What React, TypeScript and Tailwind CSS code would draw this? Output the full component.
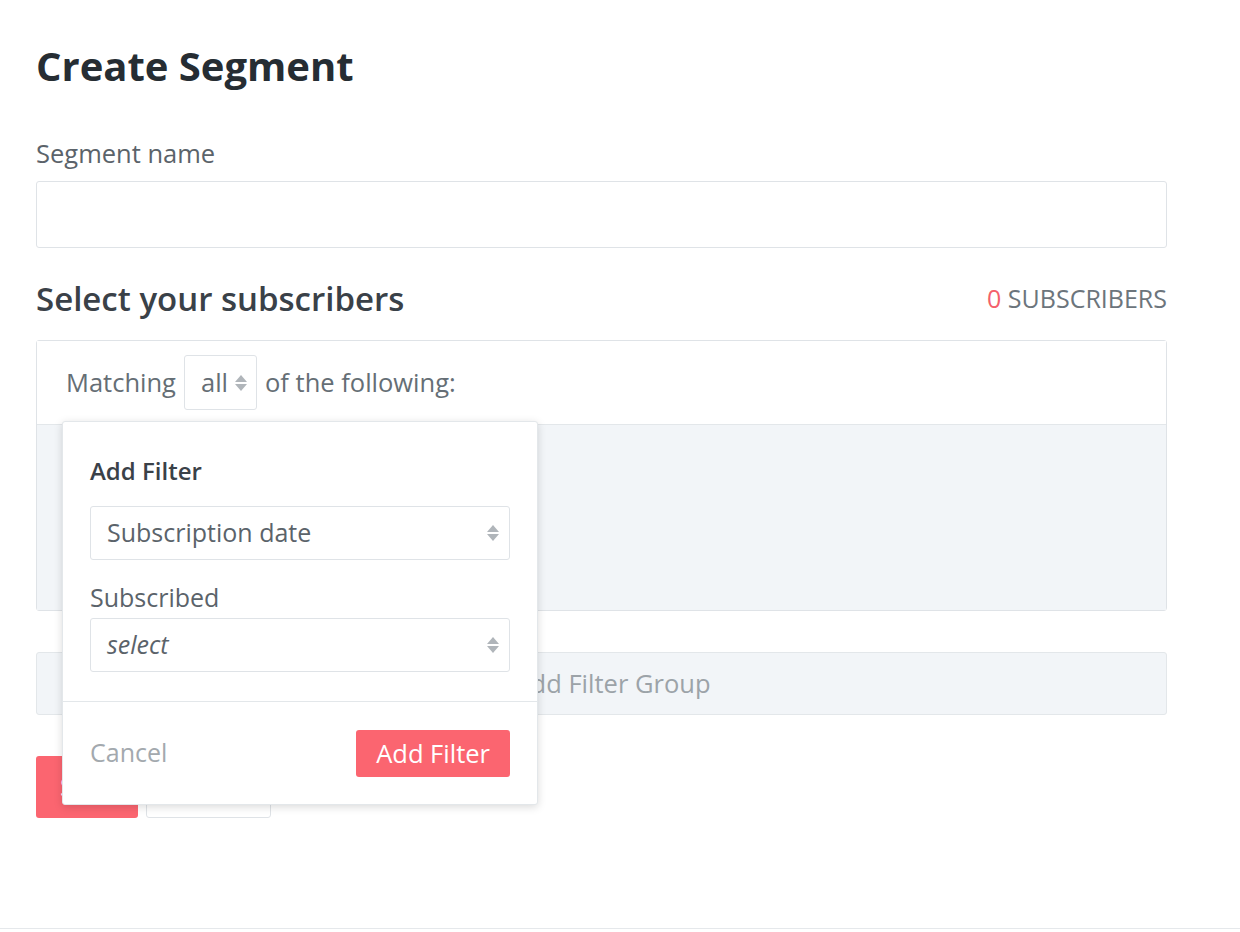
import React from "react";

const font = { fontFamily: '"Open Sans", "Noto Sans", sans-serif' };

function Arrows() {
  return (
    <svg width="14" height="18" viewBox="0 0 14 18" className="shrink-0">
      <path d="M7 1 L13 8 H1 Z" fill="#b0b5ba" />
      <path d="M7 17 L13 10 H1 Z" fill="#b0b5ba" />
    </svg>
  );
}

function Select({ value, italic }: { value: string; italic?: boolean }) {
  return (
    <div className="flex h-[54px] items-center justify-between rounded-[3px] border border-[#dfe3e7] bg-white pl-[16px] pr-[9px]">
      <span className={`text-[25px] text-[#5b636a] ${italic ? "italic" : ""}`}>{value}</span>
      <Arrows />
    </div>
  );
}

function AddFilterPopover() {
  return (
    <div className="absolute left-[25px] top-[80px] z-10 w-[476px] rounded-[3px] border border-[#e3e7ea] bg-white shadow-[0_2px_8px_rgba(0,0,0,0.15)]">
      <div className="px-[27px] pt-[32px] pb-[29px]">
        <div className="text-[24px] font-semibold leading-[34px] text-[#3a4148]">Add Filter</div>
        <div className="mt-[18px]">
          <Select value="Subscription date" />
        </div>
        <div className="mt-[21px] text-[25px] leading-[32px] text-[#5b636a]">Subscribed</div>
        <div className="mt-[5px]">
          <Select value="select" italic />
        </div>
      </div>
      <div className="flex h-[103px] items-center justify-between border-t border-[#e3e7ea] px-[27px]">
        <button className="text-[25px] text-[#a3a9ae]">Cancel</button>
        <button className="h-[47px] rounded-[3px] bg-[#fb6570] px-[20px] text-[25.5px] text-white">Add Filter</button>
      </div>
    </div>
  );
}

export default function App() {
  return (
    <div className="min-h-[932px] bg-white" style={font}>
      <div className="h-[929px] border-b border-[#e5e8eb] pl-[36px] pr-[73px] pt-[40px]">
        <h1 className="text-[40px] font-bold leading-[52px] text-[#262d33]">Create Segment</h1>

        <div className="mt-[44px] text-[25.5px] leading-[34px] text-[#5b636a]">Segment name</div>
        <input
          className="mt-[11px] h-[67px] w-full rounded-[3px] border border-[#dfe3e7] px-4 text-[25px] outline-none"
          type="text"
        />

        <div className="mt-[31px] flex items-center justify-between">
          <h2 className="text-[33px] font-semibold leading-[40px] text-[#3a4148]">Select your subscribers</h2>
          <div className="text-[25px] text-[#6c757c]">
            <span className="text-[#f4606b]">0</span> SUBSCRIBERS
          </div>
        </div>

        <div className="relative mt-[21px] rounded-[3px] border border-[#dfe3e7]">
          <div className="flex h-[83px] items-center gap-[8px] bg-white pl-[29px] text-[25.5px] text-[#656e75]">
            <span>Matching</span>
            <div className="flex h-[55px] items-center gap-[6px] rounded-[3px] border border-[#dfe3e7] pl-[16px] pr-[8px]">
              <span>all</span>
              <Arrows />
            </div>
            <span>of the following:</span>
          </div>
          <div className="h-[186px] border-t border-[#e3e7ea] bg-[#f2f5f8]" />
          <AddFilterPopover />
        </div>

        <div className="mt-[41px] flex h-[63px] items-center justify-center rounded-[3px] border border-[#e3e7ea] bg-[#f2f5f8] pl-[22px] text-[25.5px] text-[#9ca3a8]">
          Add Filter Group
        </div>

        <div className="mt-[41px] flex gap-[8px]">
          <button className="h-[62px] w-[102px] rounded-[3px] bg-[#fb6570] text-[25px] text-white">Save</button>
          <button className="h-[62px] w-[125px] rounded-[3px] border border-[#dfe3e7] bg-white text-[25px] text-[#5b636a]">Cancel</button>
        </div>
      </div>
    </div>
  );
}
